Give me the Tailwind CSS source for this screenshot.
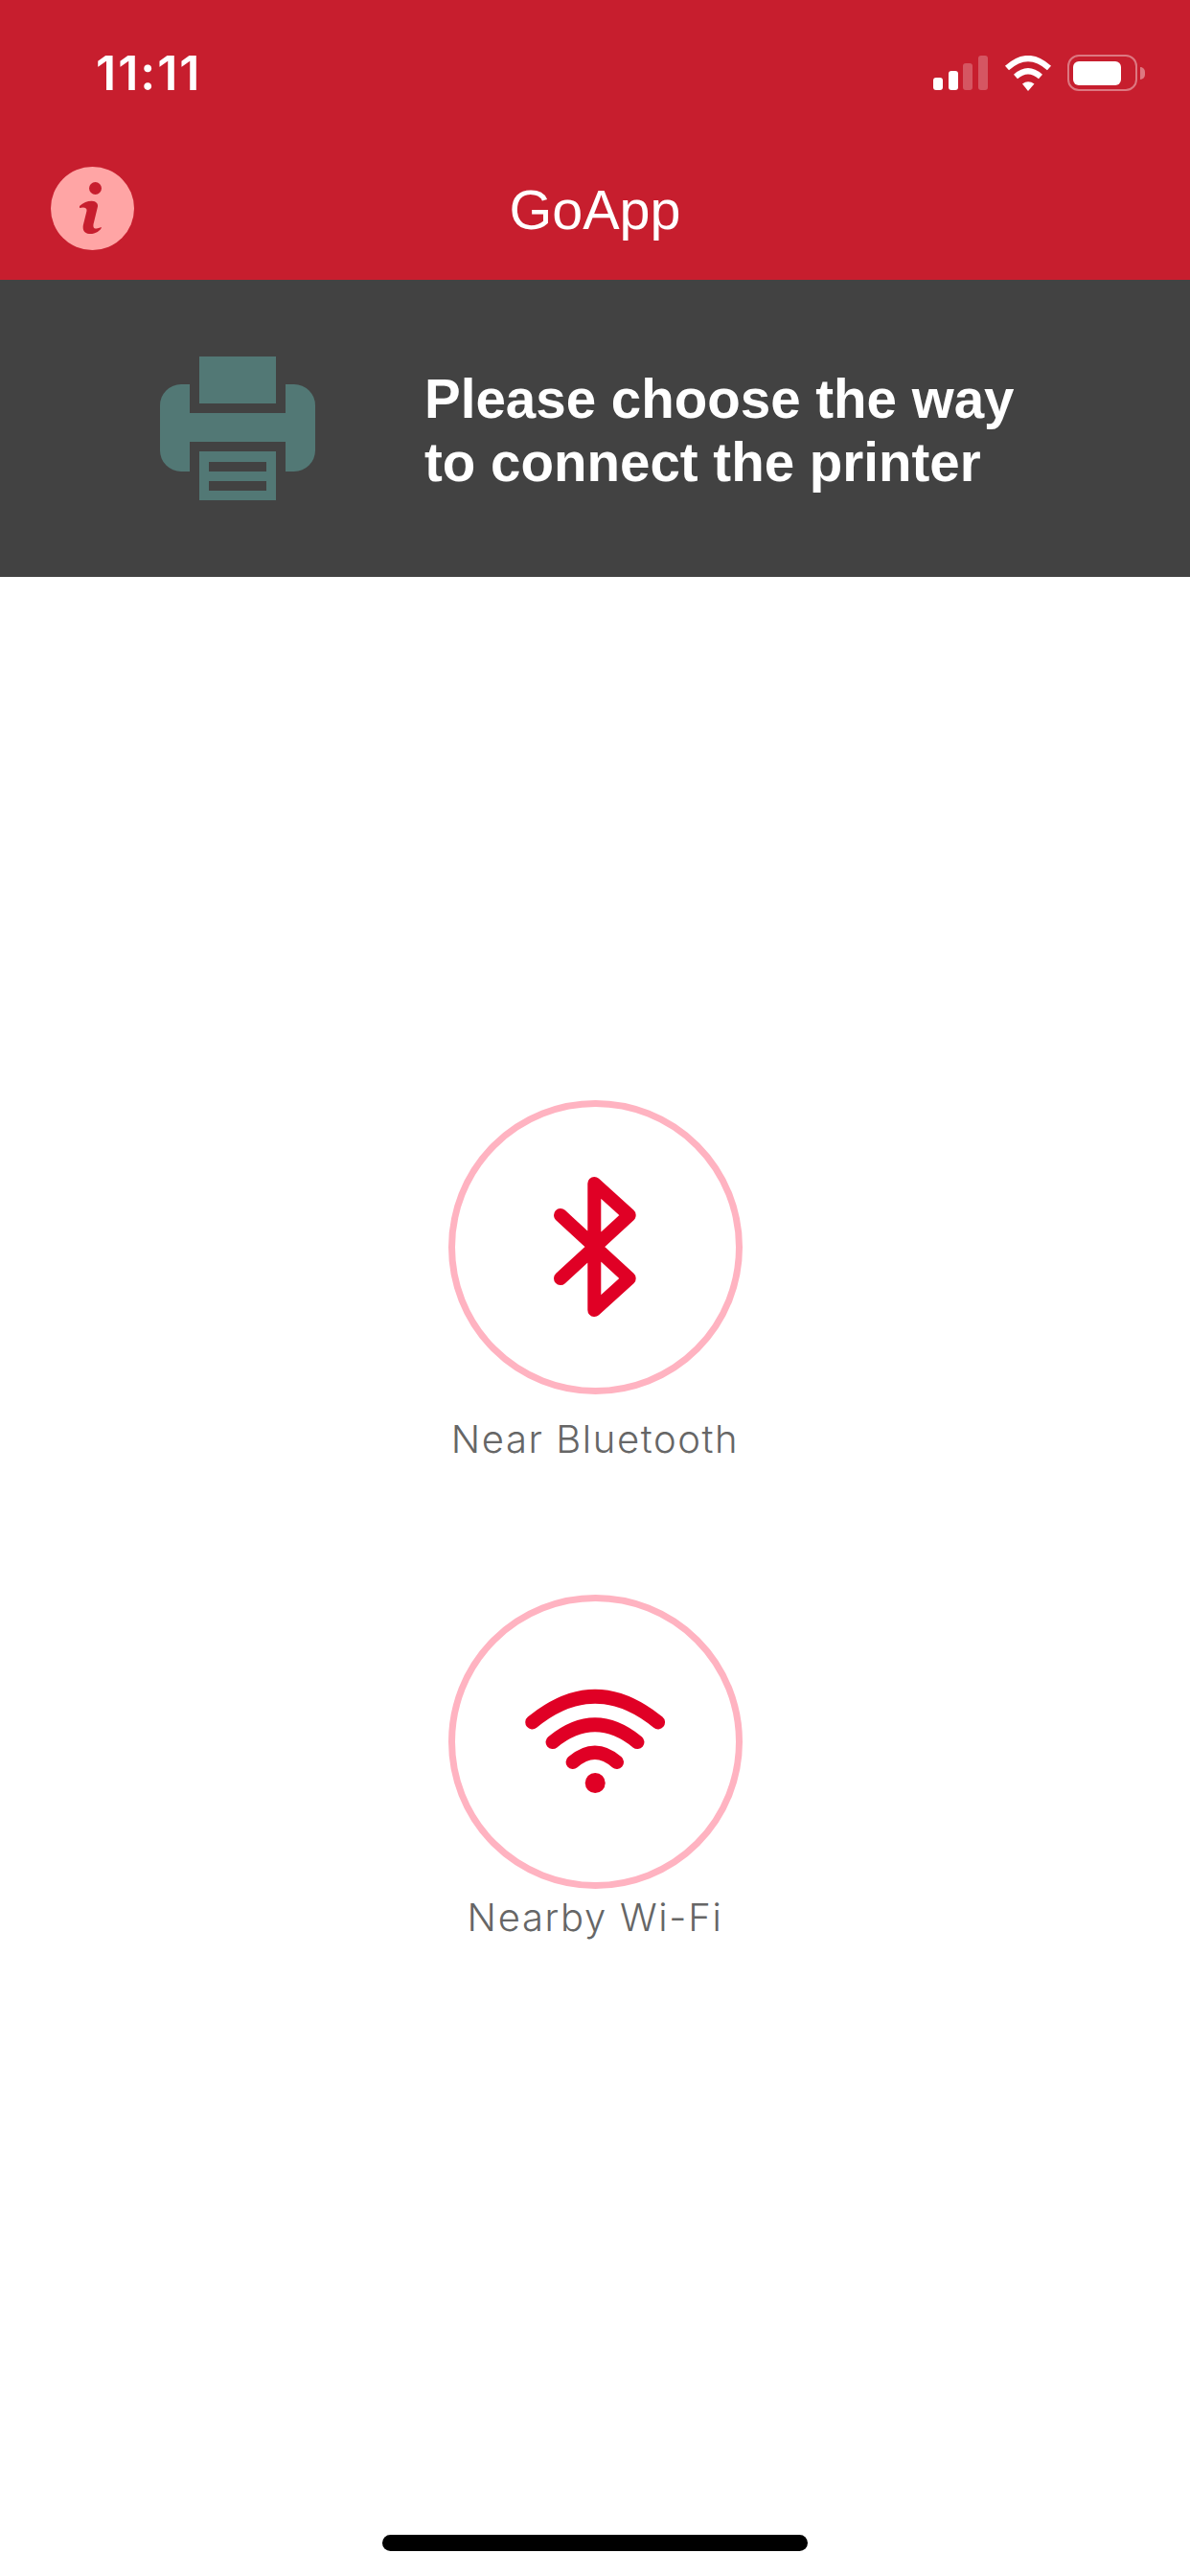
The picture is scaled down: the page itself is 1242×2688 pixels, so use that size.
<!doctype html>
<html>
<head>
<meta charset="utf-8">
<script src="https://cdn.jsdelivr.net/npm/@tailwindcss/browser@4"></script>
</head>
<body class="bg-white">
<div class="flex flex-col w-[1242px] h-[2688px] bg-white font-['Liberation_Sans',sans-serif] overflow-hidden">
  <header class="flex flex-col h-[292px] bg-[#c71e2e] text-white shrink-0">
    <div class="flex items-center justify-between h-[152px] pl-[100px] pr-[47px]">
      <span class="text-[50px] leading-[50px] font-semibold tracking-[2px] font-['Inter',sans-serif]">11:11</span>
      <div class="flex items-center gap-[16px]">
        <svg width="58" height="36" viewBox="0 0 58 36" fill="#fff">
          <rect x="0" y="23" width="10" height="13" rx="3"/>
          <rect x="16" y="16" width="10" height="20" rx="3"/>
          <rect x="31" y="8" width="10" height="28" rx="3" fill-opacity=".25"/>
          <rect x="47" y="0" width="10" height="36" rx="3" fill-opacity=".25"/>
        </svg>
        <svg width="50" height="37" viewBox="0 0 50 37" fill="none" stroke="#fff" stroke-width="6">
          <path d="M3 13 Q25 -7 47 13"/>
          <path d="M12 22 Q25 10.5 38 22"/>
          <path d="M19 29.5 Q25 25 31.5 29.5 L25 37 Z" fill="#fff" stroke="none"/>
        </svg>
        <div class="flex items-center gap-[3px]">
          <div class="flex items-center w-[73px] h-[38px] rounded-[12px] border-[2.5px] border-white/40 pl-[4px]">
            <div class="w-[50px] h-[25px] rounded-[6px] bg-white"></div>
          </div>
          <div class="w-[5px] h-[13px] bg-white/40 rounded-r-[5px]"></div>
        </div>
      </div>
    </div>
    <div class="relative flex items-center justify-center h-[140px] pb-[6px]">
      <svg class="absolute left-[53px] top-[22px]" width="87" height="87" viewBox="0 0 87 87">
        <circle cx="43.5" cy="43.5" r="43.5" fill="#ffa5a5"/>
        <circle cx="46.5" cy="22.5" r="6.5" fill="#c71e2e"/>
        <path d="M30 41 C34 37 39 35.5 43 35.7 C47.5 36 49.5 38.5 49 41.5 L45 58 C43.5 63 45 65 48 64.5 C50 64 51.5 63.5 53 63 C52 67 46 70.5 40 70 C35 69.5 33 66 33.8 61 L37.5 46 C38 43 35 41.5 30 43 Z" fill="#c71e2e"/>
      </svg>
      <span class="text-[57.5px] leading-[60px]">GoApp</span>
    </div>
  </header>
  <section class="flex items-center h-[310px] bg-[#424242] shrink-0 pl-[167px] gap-[113px]">
    <svg width="163" height="150" viewBox="167 373 163 150" fill="#527875">
      <rect x="208" y="373" width="80" height="49"/>
      <path d="M198 402 V432 H298 V402 H307 A22 22 0 0 1 329 424 V471 A22 22 0 0 1 307 493 H298 V462 H198 V493 H189 A22 22 0 0 1 167 471 V424 A22 22 0 0 1 189 402 Z"/>
      <path fill-rule="evenodd" d="M208 472 H288 V523 H208 Z M218 483 V493 H278 V483 Z M218 503 V513 H278 V503 Z"/>
    </svg>
    <p class="mt-[6px] text-[56.5px] leading-[66px] font-bold text-white whitespace-nowrap">Please choose the way<br>to connect the printer</p>
  </section>
  <main class="relative flex flex-col items-center flex-1 pt-[546px]">
    <div class="flex flex-col items-center">
      <div class="flex items-center justify-center w-[307px] h-[307px] rounded-full border-[7px] border-[#ffb3c1]">
        <svg width="100" height="160" viewBox="571 1222 100 160" fill="none" stroke="#e00025" stroke-width="14" stroke-linecap="round" stroke-linejoin="round">
          <path d="M585 1268 L656.7 1334 L620.3 1367 V1235 L656.7 1268 L585 1334"/>
        </svg>
      </div>
      <span class="mt-[23px] text-[40px] leading-[48px] tracking-[1.6px] text-[#666] font-light font-['Inter',sans-serif]">Near Bluetooth</span>
    </div>
    <div class="flex flex-col items-center mt-[138px]">
      <div class="flex items-center justify-center w-[307px] h-[307px] rounded-full border-[7px] border-[#ffb3c1]">
        <svg width="160" height="140" viewBox="541.5 1748.5 160 140" fill="none" stroke="#e00025" stroke-width="14.5" stroke-linecap="round">
          <path d="M556 1797.7 Q621.5 1743.7 687.3 1797.7"/>
          <path d="M577.3 1818.3 Q621.5 1782.3 665.7 1818.3"/>
          <path d="M598.3 1839.3 Q621.5 1819.3 644.3 1839.3"/>
          <circle cx="621.7" cy="1861" r="10.5" fill="#e00025" stroke="none"/>
        </svg>
      </div>
      <span class="mt-[6px] text-[40px] leading-[48px] tracking-[1.7px] text-[#666] font-light font-['Inter',sans-serif]">Nearby Wi-Fi</span>
    </div>
    <div class="absolute left-[399px] top-[2043px] w-[444px] h-[17px] rounded-full bg-black"></div>
  </main>
</div>
</body>
</html>
